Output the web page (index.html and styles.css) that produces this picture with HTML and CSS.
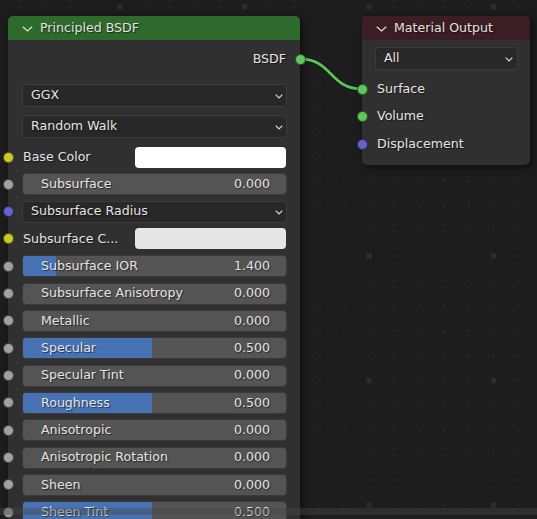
FILE: index.html
```html
<!DOCTYPE html>
<html>
<head>
<meta charset="utf-8">
<title>Shader Nodes</title>
<link rel="stylesheet" href="styles.css">
</head>
<body>
<div class="canvas">
  <svg class="grid" width="537" height="519" viewBox="0 0 537 519">
    <defs>
      <pattern id="gsmall" width="24.9" height="24.9" patternUnits="userSpaceOnUse">
        <rect x="19.25" y="5.75" width="2.5" height="2.5" fill="#252525"/>
      </pattern>
      <pattern id="glarge" width="124.5" height="124.5" patternUnits="userSpaceOnUse">
        <rect x="117.5" y="4.5" width="5" height="5" fill="#2d2d2d"/>
      </pattern>
    </defs>
    <rect width="537" height="519" fill="url(#gsmall)"/>
    <rect width="537" height="519" fill="url(#glarge)"/>
  </svg>

  <svg class="links" width="537" height="519" viewBox="0 0 537 519">
    <path d="M300 59 C 333 59 329 89 362 89" fill="none" stroke="rgba(0,0,0,0.45)" stroke-width="4.5"/>
    <path d="M300 59 C 333 59 329 89 362 89" fill="none" stroke="#5bc257" stroke-width="2.8"/>
  </svg>

  <div class="node principled">
    <div class="node-header header-green">
      <svg class="chev" width="11" height="6" viewBox="0 0 11 6"><polyline points="0.8,0.8 5.5,5 10.2,0.8" fill="none" stroke="#dcdcdc" stroke-width="1.3"/></svg>
      <span class="title">Principled BSDF</span>
    </div>
    <div class="node-body body-principled">
      <div class="out-row">
        <span class="label">BSDF</span>
        <span class="socket sock-green sock-right"></span>
      </div>

      <div class="dropdown dd-first">
        <span class="label">GGX</span>
        <svg class="dd-chev" width="8" height="5" viewBox="0 0 8 5"><polyline points="0.7,0.7 4,4 7.3,0.7" fill="none" stroke="#d8d8d8" stroke-width="1.2"/></svg>
      </div>
      <div class="dropdown dd-next">
        <span class="label">Random Walk</span>
        <svg class="dd-chev" width="8" height="5" viewBox="0 0 8 5"><polyline points="0.7,0.7 4,4 7.3,0.7" fill="none" stroke="#d8d8d8" stroke-width="1.2"/></svg>
      </div>

      <div class="row row-color-first">
        <span class="socket sock-yellow sock-left"></span>
        <div class="color-field">
          <span class="label">Base Color</span>
          <span class="swatch swatch-white"></span>
        </div>
      </div>

      <div class="row">
        <span class="socket sock-grey sock-left"></span>
        <div class="slider"><span class="label">Subsurface</span><span class="value">0.000</span></div>
      </div>

      <div class="row">
        <span class="socket sock-purple sock-left"></span>
        <div class="dropdown dd-row">
          <span class="label">Subsurface Radius</span>
          <svg class="dd-chev" width="8" height="5" viewBox="0 0 8 5"><polyline points="0.7,0.7 4,4 7.3,0.7" fill="none" stroke="#d8d8d8" stroke-width="1.2"/></svg>
        </div>
      </div>

      <div class="row">
        <span class="socket sock-yellow sock-left"></span>
        <div class="color-field">
          <span class="label">Subsurface C...</span>
          <span class="swatch swatch-light"></span>
        </div>
      </div>

      <div class="row">
        <span class="socket sock-grey sock-left"></span>
        <div class="slider"><span class="fill" style="width:33px"></span><span class="label">Subsurface IOR</span><span class="value">1.400</span></div>
      </div>

      <div class="row">
        <span class="socket sock-grey sock-left"></span>
        <div class="slider"><span class="label">Subsurface Anisotropy</span><span class="value">0.000</span></div>
      </div>

      <div class="row">
        <span class="socket sock-grey sock-left"></span>
        <div class="slider"><span class="label">Metallic</span><span class="value">0.000</span></div>
      </div>

      <div class="row">
        <span class="socket sock-grey sock-left"></span>
        <div class="slider"><span class="fill" style="width:129px"></span><span class="label">Specular</span><span class="value">0.500</span></div>
      </div>

      <div class="row">
        <span class="socket sock-grey sock-left"></span>
        <div class="slider"><span class="label">Specular Tint</span><span class="value">0.000</span></div>
      </div>

      <div class="row">
        <span class="socket sock-grey sock-left"></span>
        <div class="slider"><span class="fill" style="width:129px"></span><span class="label">Roughness</span><span class="value">0.500</span></div>
      </div>

      <div class="row">
        <span class="socket sock-grey sock-left"></span>
        <div class="slider"><span class="label">Anisotropic</span><span class="value">0.000</span></div>
      </div>

      <div class="row">
        <span class="socket sock-grey sock-left"></span>
        <div class="slider"><span class="label">Anisotropic Rotation</span><span class="value">0.000</span></div>
      </div>

      <div class="row">
        <span class="socket sock-grey sock-left"></span>
        <div class="slider"><span class="label">Sheen</span><span class="value">0.000</span></div>
      </div>

      <div class="row">
        <span class="socket sock-grey sock-left"></span>
        <div class="slider"><span class="fill" style="width:129px"></span><span class="label">Sheen Tint</span><span class="value">0.500</span></div>
      </div>
    </div>
  </div>

  <div class="node output">
    <div class="node-header header-red">
      <svg class="chev" width="11" height="6" viewBox="0 0 11 6"><polyline points="0.8,0.8 5.5,5 10.2,0.8" fill="none" stroke="#dcdcdc" stroke-width="1.3"/></svg>
      <span class="title">Material Output</span>
    </div>
    <div class="node-body body-output">
      <div class="dropdown dd-all">
        <span class="label">All</span>
        <svg class="dd-chev" width="8" height="5" viewBox="0 0 8 5"><polyline points="0.7,0.7 4,4 7.3,0.7" fill="none" stroke="#d8d8d8" stroke-width="1.2"/></svg>
      </div>
      <div class="in-row in-first">
        <span class="socket sock-green sock-in"></span>
        <span class="label">Surface</span>
      </div>
      <div class="in-row">
        <span class="socket sock-green sock-in"></span>
        <span class="label">Volume</span>
      </div>
      <div class="in-row">
        <span class="socket sock-purple sock-in"></span>
        <span class="label">Displacement</span>
      </div>
    </div>
  </div>

  <div class="hbar"></div>
</div>
</body>
</html>
```

FILE: styles.css
```css
* {
  box-sizing: border-box;
}

html, body {
  margin: 0;
  padding: 0;
}

body {
  width: 537px;
  height: 519px;
  overflow: hidden;
  background: #1d1d1d;
  font-family: "DejaVu Sans", "Noto Sans", sans-serif;
  font-size: 12.6px;
  color: #e4e4e4;
}

.canvas {
  position: relative;
  width: 537px;
  height: 519px;
  overflow: hidden;
  background: #1d1d1d;
}

.grid,
.links {
  position: absolute;
  left: 0;
  top: 0;
}

.label,
.value,
.title {
  white-space: nowrap;
  text-shadow: 1px 1px 1px rgba(0, 0, 0, 0.55);
  line-height: 1;
}

/* nodes */
.node {
  position: absolute;
  background: #303030;
  border-radius: 5px;
  box-shadow: 2px 2px 9px rgba(0, 0, 0, 0.6);
}

.principled {
  left: 8px;
  top: 16px;
  width: 292px;
  height: 540px;
}

.output {
  left: 362px;
  top: 16px;
  width: 168px;
  height: 149px;
}

.node-header {
  height: 24px;
  border-radius: 5px 5px 0 0;
  display: flex;
  align-items: center;
  padding-left: 14px;
  gap: 7px;
}

.header-green {
  background: #2e6a2b;
}

.header-red {
  background: #3c1d24;
}

.chev {
  display: block;
  flex: none;
  margin-top: 1px;
}

.title {
  color: #e2e2e2;
}

.node-body {
  display: flex;
  flex-direction: column;
}

.body-principled {
  padding: 0 13px 0 14px;
}

.body-output {
  padding: 0 12px 0 13px;
}

/* sockets */
.socket {
  position: absolute;
  top: 50%;
  width: 11px;
  height: 11px;
  margin-top: -5.5px;
  border-radius: 50%;
  border: 1px solid rgba(0, 0, 0, 0.55);
}

.sock-left {
  left: -19.5px;
}

.sock-right {
  right: -18.5px;
}

.sock-in {
  left: -18.5px;
}

.sock-green {
  background: #60c75d;
}

.sock-yellow {
  background: #c9c92a;
}

.sock-purple {
  background: #6464cc;
}

.sock-grey {
  background: #a1a1a1;
}

/* rows */
.out-row {
  position: relative;
  height: 22px;
  margin-top: 8px;
  display: flex;
  align-items: center;
  justify-content: flex-end;
  padding-right: 1px;
}

.row {
  position: relative;
  height: 22px;
  margin-top: 5.33px;
}

.row-color-first {
  margin-top: 8px;
}

.dropdown {
  height: 23px;
  border: 1px solid #3c3c3c;
  background: #282828;
  border-radius: 4px;
  display: flex;
  align-items: center;
  justify-content: space-between;
  padding: 0 3px 0 8px;
}

.dd-first {
  margin-top: 14px;
}

.dd-next {
  margin-top: 8px;
}

.dd-row {
  height: 22px;
}

.dd-all {
  margin-top: 7px;
  padding-right: 4px;
}

.dd-chev {
  display: block;
  flex: none;
  margin-top: 1px;
}

.slider {
  position: relative;
  height: 22px;
  border: 1px solid #3a3a3a;
  background: #545454;
  border-radius: 4px;
  display: flex;
  align-items: center;
  justify-content: space-between;
  padding: 0 16px 0 18px;
  overflow: hidden;
}

.fill {
  position: absolute;
  left: 0;
  top: 0;
  bottom: 0;
  background: #4772b3;
}

.slider .label,
.slider .value {
  position: relative;
}

.color-field {
  height: 22px;
  display: flex;
  align-items: center;
  justify-content: space-between;
  padding-left: 1px;
  padding-right: 1px;
}

.swatch {
  width: 151px;
  height: 21px;
  border-radius: 4px;
}

.swatch-white {
  background: #ffffff;
}

.swatch-light {
  background: #e6e6e6;
}

.in-row {
  position: relative;
  height: 22px;
  margin-top: 5.5px;
  display: flex;
  align-items: center;
  padding-left: 2px;
}

.in-first {
  margin-top: 8px;
}

.hbar {
  position: absolute;
  left: 0;
  right: 0;
  top: 507.5px;
  height: 7px;
  background: rgba(72, 72, 72, 0.42);
  pointer-events: none;
}
```
